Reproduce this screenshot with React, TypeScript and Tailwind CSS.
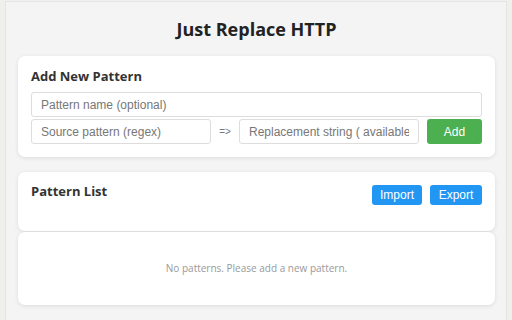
export default function App() {
  return (
    <div className="h-[320px] w-full overflow-hidden bg-[#efefeb] pl-[5px] pr-[5px] pt-[1px]">
      <div className="flex h-full flex-col border-x border-t border-[#e4e4e4] bg-[#f4f4f4] pl-[12px] pr-[11px] font-['Open_Sans',sans-serif]">
        <h1 className="mt-[15px] text-center text-[18px] font-bold leading-[24px] text-[#222]">Just Replace HTTP</h1>

        <div className="mt-[15px] rounded-[7px] bg-white px-[13px] pt-[11px] pb-[13px] shadow-[0_1px_4px_rgba(0,0,0,0.1)]">
          <h2 className="text-[13px] font-bold leading-[18px] text-[#333]">Add New Pattern</h2>
          <div className="mt-[7px] flex flex-col gap-[2px] font-['Liberation_Sans',Arial,sans-serif] text-[12px]">
            <input
              className="h-[25px] w-full rounded-[3px] border border-[#ddd] px-[9px] text-[#333] placeholder-[#777] outline-none"
              placeholder="Pattern name (optional)"
            />
            <div className="flex items-center">
              <input
                className="h-[25px] w-[180px] rounded-[3px] border border-[#ddd] px-[9px] text-[#333] placeholder-[#777] outline-none"
                placeholder="Source pattern (regex)"
              />
              <span className="w-[28px] text-center text-[10px] text-[#777]">=&gt;</span>
              <input
                className="h-[25px] w-[180px] rounded-[3px] border border-[#ddd] px-[9px] text-[#333] placeholder-[#777] outline-none"
                placeholder="Replacement string ( available: $1, $2 )"
              />
              <button className="ml-auto h-[25px] w-[55px] rounded-[3px] bg-[#4caf50] text-[12px] text-white">Add</button>
            </div>
          </div>
        </div>

        <div className="mt-[15px] h-[59px] rounded-[7px] bg-white px-[13px] shadow-[0_1px_4px_rgba(0,0,0,0.1)]">
          <div className="flex items-start justify-between pt-[12px]">
            <h2 className="-mt-[2px] text-[13px] font-bold leading-[18px] text-[#333]">Pattern List</h2>
            <div className="mt-[1px] flex gap-[8px] font-['Liberation_Sans',Arial,sans-serif] text-[12px] text-white">
              <button className="h-[20px] w-[50px] rounded-[3px] bg-[#2196f3]">Import</button>
              <button className="h-[20px] w-[52px] rounded-[3px] bg-[#2196f3]">Export</button>
            </div>
          </div>
        </div>

        <div className="mt-[1px] flex h-[73px] items-center justify-center rounded-[7px] bg-white shadow-[0_1px_4px_rgba(0,0,0,0.1)]">
          <p className="text-[10px] text-[#999]">No patterns. Please add a new pattern.</p>
        </div>
      </div>
    </div>
  )
}
